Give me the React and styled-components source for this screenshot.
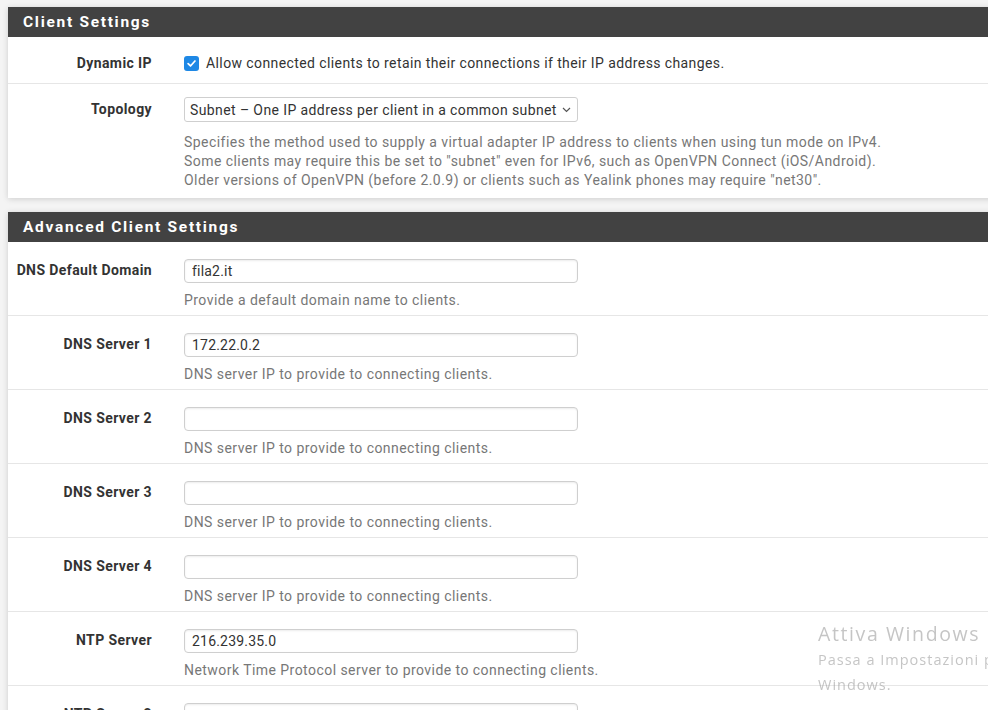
import React from "react";
import styled, { createGlobalStyle } from "styled-components";

const Global = createGlobalStyle`
  html, body { margin: 0; padding: 0; background: #f4f4f4; overflow: hidden; }
  body { font-family: Roboto, "Liberation Sans", sans-serif; color: #333; }
`;

const Page = styled.div`
  padding: 7px 0 0 8px;
  width: 1120px;
  display: flex;
  flex-direction: column;
  gap: 14px;
`;

const Panel = styled.section`
  background: #fff;
  box-shadow: 0 1px 6px rgba(0, 0, 0, 0.16);
`;

const PanelHeader = styled.h2`
  margin: 0;
  height: 30px;
  display: flex;
  align-items: center;
  padding-left: 15px;
  background: #424242;
  color: #fff;
  font-size: 15.5px;
  font-weight: 700;
  letter-spacing: 1.7px;
`;

const Row = styled.div`
  display: grid;
  grid-template-columns: 160px 1fr;
  padding: ${(p) => p.$pad || "17px 0 5px"};
  border-bottom: ${(p) => (p.$last ? "none" : "1px solid #e6e6e6")};
`;

const Label = styled.div`
  text-align: right;
  padding-right: 16px;
  font-size: 14px;
  font-weight: 700;
  letter-spacing: 0.4px;
  color: #333;
  line-height: ${(p) => p.$lh || "20px"};
  white-space: nowrap;
`;

const Field = styled.div`
  padding-left: 16px;
  display: flex;
  flex-direction: column;
  align-items: flex-start;
`;

const CheckLine = styled.label`
  display: flex;
  align-items: center;
  gap: 7px;
  font-size: 14px;
  letter-spacing: 0.4px;
  line-height: 20px;
  color: #333;
`;

const Box = styled.span`
  width: 15px;
  height: 15px;
  border-radius: 3px;
  background: #1e88e5;
  display: inline-flex;
  align-items: center;
  justify-content: center;
  flex: none;
`;

const Select = styled.div`
  height: 25px;
  box-sizing: border-box;
  width: 394px;
  border: 1px solid #cfcfcf;
  border-radius: 3px;
  display: flex;
  align-items: center;
  justify-content: space-between;
  gap: 4px;
  padding: 0 6px 0 5px;
  font-size: 14px;
  letter-spacing: 0.4px;
  white-space: nowrap;
  color: #333;
  background: #fff;

  svg { flex: none; }
`;

const Input = styled.input`
  box-sizing: border-box;
  width: 394px;
  height: 24px;
  border: 1px solid #cfcfcf;
  border-radius: 4px;
  box-shadow: inset 0 1px 2px rgba(0, 0, 0, 0.08);
  padding: 0 7px;
  font-family: Roboto, "Liberation Sans", sans-serif;
  font-size: 14px;
  letter-spacing: 0.2px;
  color: #333;
  outline: none;
`;

const Help = styled.div`
  margin-top: ${(p) => p.$mt || "8px"};
  font-size: 14px;
  letter-spacing: 0.45px;
  line-height: 19px;
  color: #777;
  white-space: nowrap;
`;

const Watermark = styled.div`
  position: fixed;
  left: 818px;
  top: 621px;
  font-family: "Open Sans", "Noto Sans", sans-serif;
  color: rgba(150, 150, 150, 0.55);
  white-space: nowrap;
  pointer-events: none;
`;

const WmTitle = styled.div`
  font-size: 19.5px;
  letter-spacing: 1.6px;
  line-height: 26px;
`;

const WmSub = styled.div`
  font-size: 14.5px;
  letter-spacing: 1px;
  line-height: 25px;
`;

const Check = () => (
  <svg width="11" height="11" viewBox="0 0 12 12">
    <path d="M2.3 6.2 L4.9 8.7 L9.8 3.3" fill="none" stroke="#fff" strokeWidth="1.9" strokeLinecap="round" strokeLinejoin="round" />
  </svg>
);

const Chevron = () => (
  <svg width="9" height="6" viewBox="0 0 9 6">
    <path d="M1 1 L4.5 4.5 L8 1" fill="none" stroke="#555" strokeWidth="1.2" />
  </svg>
);

const dnsHelp = "DNS server IP to provide to connecting clients.";
const ntpHelp = "Network Time Protocol server to provide to connecting clients.";

const inputRows = [
  { label: "DNS Default Domain", value: "fila2.it", help: "Provide a default domain name to clients." },
  { label: "DNS Server 1", value: "172.22.0.2", help: dnsHelp },
  { label: "DNS Server 2", value: "", help: dnsHelp },
  { label: "DNS Server 3", value: "", help: dnsHelp },
  { label: "DNS Server 4", value: "", help: dnsHelp },
  { label: "NTP Server", value: "216.239.35.0", help: ntpHelp },
  { label: "NTP Server 2", value: "", help: ntpHelp },
];

export default function App() {
  return (
    <>
      <Global />
      <Page>
        <Panel>
          <PanelHeader>Client Settings</PanelHeader>
          <Row $pad="16px 0 10px">
            <Label>Dynamic IP</Label>
            <Field>
              <CheckLine>
                <Box><Check /></Box>
                Allow connected clients to retain their connections if their IP address changes.
              </CheckLine>
            </Field>
          </Row>
          <Row $last $pad="13px 0 8px">
            <Label $lh="25px">Topology</Label>
            <Field>
              <Select>
                <span>Subnet – One IP address per client in a common subnet</span>
                <Chevron />
              </Select>
              <Help $mt="11px">
                Specifies the method used to supply a virtual adapter IP address to clients when using tun mode on IPv4.
                <br />
                Some clients may require this be set to "subnet" even for IPv6, such as OpenVPN Connect (iOS/Android).
                <br />
                Older versions of OpenVPN (before 2.0.9) or clients such as Yealink phones may require "net30".
              </Help>
            </Field>
          </Row>
        </Panel>
        <Panel>
          <PanelHeader>Advanced Client Settings</PanelHeader>
          {inputRows.map((r) => (
            <Row key={r.label}>
              <Label $lh="22px">{r.label}</Label>
              <Field>
                <Input defaultValue={r.value} />
                <Help>{r.help}</Help>
              </Field>
            </Row>
          ))}
        </Panel>
      </Page>
      <Watermark>
        <WmTitle>Attiva Windows</WmTitle>
        <WmSub>
          Passa a Impostazioni per attivare
          <br />
          Windows.
        </WmSub>
      </Watermark>
    </>
  );
}
